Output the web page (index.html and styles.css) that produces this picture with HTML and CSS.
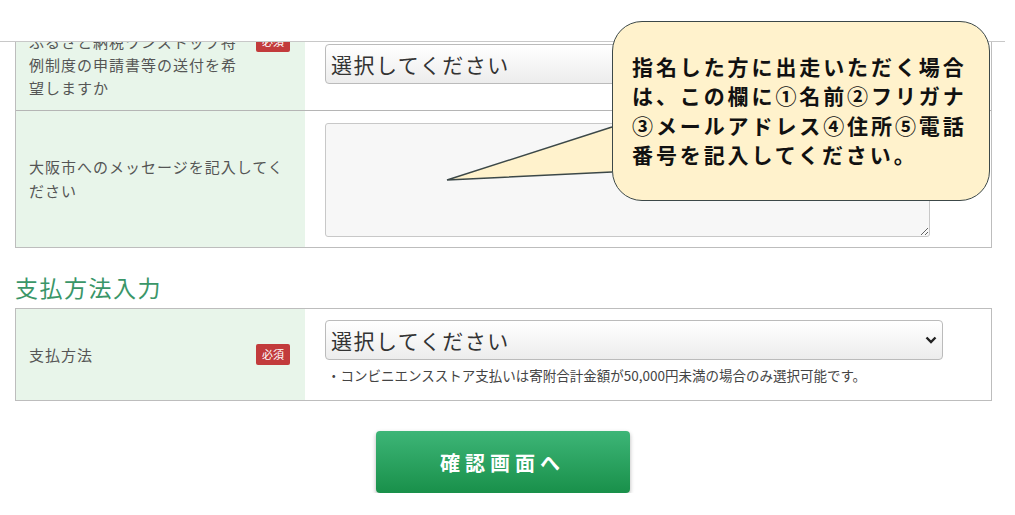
FILE: index.html
```html
<!DOCTYPE html>
<html lang="ja">

<head>
    <meta charset="UTF-8">
    <title>寄附申込 入力</title>
    <link rel="stylesheet" href="styles.css">
</head>

<body>
    <div class="topbar"></div>

    <div class="page">
        <div class="form-table">
            <div class="row row-first">
                <div class="label">
                    <span class="label-text">ふるさと納税ワンストップ特例制度の申請書等の送付を希望しますか</span>
                    <span class="badge">必須</span>
                </div>
                <div class="field">
                    <div class="select-wrap">
                        <select class="select">
                            <option>選択してください</option>
                        </select>
                        <svg class="chevron" width="12" height="8" viewBox="0 0 12 8">
                            <path d="M1.5 1.5 L6 6 L10.5 1.5" fill="none" stroke="#222" stroke-width="2.4" />
                        </svg>
                    </div>
                </div>
            </div>
            <div class="row row-message">
                <div class="label">
                    <span class="label-text">大阪市へのメッセージを記入してください</span>
                </div>
                <div class="field">
                    <textarea class="message"></textarea>
                </div>
            </div>
        </div>

        <h2 class="section-title">支払方法入力</h2>

        <div class="form-table">
            <div class="row row-payment">
                <div class="label">
                    <span class="label-text">支払方法</span>
                    <span class="badge">必須</span>
                </div>
                <div class="field">
                    <div class="select-wrap">
                        <select class="select">
                            <option>選択してください</option>
                        </select>
                        <svg class="chevron" width="12" height="8" viewBox="0 0 12 8">
                            <path d="M1.5 1.5 L6 6 L10.5 1.5" fill="none" stroke="#222" stroke-width="2.4" />
                        </svg>
                    </div>
                    <p class="note">・コンビニエンスストア支払いは寄附合計金額が50,000円未満の場合のみ選択可能です。</p>
                </div>
            </div>
        </div>

        <div class="actions">
            <button class="confirm">確認画面へ</button>
        </div>

        <!-- callout over the message field -->
        <svg class="callout-tail" width="180" height="70" viewBox="0 0 180 70">
            <path d="M172 7 L7 60 L172 52" fill="#fff2cc" stroke="#3c4848" stroke-width="1.4" stroke-linejoin="miter" />
        </svg>
        <div class="callout">
            指名した方に出走いただく場合は、この欄に①名前②フリガナ③メールアドレス④住所⑤電話番号を記入してください。
        </div>
    </div>
</body>

</html>
```

FILE: styles.css
```css
body {
    margin: 0;
    background-color: #fff;
    font-family: "Noto Sans CJK JP", "Noto Sans", sans-serif;
    color: #555;
}

.topbar {
    position: fixed;
    top: 0;
    left: 0;
    width: 1005px;
    height: 41px;
    background-color: #fff;
    border-bottom: 1px solid #c8c8c8;
    z-index: 5;
}

.page {
    position: relative;
    padding: 18px 0 0 15px;
    width: 977px;
}

.form-table {
    border: 1px solid #bdbdbd;
}

.row {
    display: grid;
    grid-template-columns: 289px 1fr;
    min-height: 91px;
}

.row + .row {
    border-top: 1px solid #b5b5b5;
}

.label {
    background-color: #e8f5ea;
    display: flex;
    align-items: center;
    justify-content: space-between;
    padding: 0 15px 0 13px;
    font-size: 15px;
    line-height: 23px;
    letter-spacing: 1px;
}

.row-first .label-text {
    width: 215px;
}

.row-message .label-text {
    width: 265px;
    line-height: 24px;
}

.row-first .badge {
    align-self: flex-start;
    margin-top: 12px;
}

.badge {
    flex-shrink: 0;
    background-color: #c23b3c;
    color: #fff;
    font-size: 11px;
    line-height: 21px;
    width: 34px;
    text-align: center;
    letter-spacing: 0;
    border-radius: 2px;
}

.field {
    display: flex;
    flex-direction: column;
    justify-content: center;
    padding: 10px 0 11px 20px;
}

.row-payment .field {
    justify-content: flex-start;
    padding: 11px 0 8px 20px;
}

.select-wrap {
    position: relative;
    width: 618px;
}

.select {
    display: block;
    appearance: none;
    width: 100%;
    height: 40px;
    padding: 0 30px 0 5px;
    font-family: inherit;
    font-size: 21px;
    letter-spacing: 1.5px;
    color: #333;
    border: 1px solid #bbb;
    border-radius: 4px;
    background: linear-gradient(#fff, #ececec);
}

.chevron {
    position: absolute;
    right: 6px;
    top: 16px;
}

.note {
    margin: 6px 0 0 2px;
    font-size: 13.5px;
    line-height: 18px;
    color: #444;
}

.row-message .field {
    padding: 12px 0 10px 20px;
}

.message {
    display: block;
    width: 605px;
    height: 114px;
    box-sizing: border-box;
    background-color: #f7f7f7;
    border: 1px solid #c8c8c8;
    border-radius: 3px;
}

.section-title {
    margin: 24px 0 6px;
    font-size: 23px;
    line-height: 30px;
    font-weight: normal;
    color: #3a9668;
    letter-spacing: 1.5px;
}

.actions {
    display: flex;
    justify-content: center;
    padding: 30px 0 0 0;
    width: 975px;
}

.confirm {
    width: 254px;
    height: 62px;
    border: none;
    border-radius: 4px;
    background: linear-gradient(#3db577, #19904a);
    box-shadow: 0 2px 4px rgba(0, 0, 0, 0.3);
    color: #fff;
    font-family: inherit;
    font-size: 20px;
    font-weight: bold;
    letter-spacing: 5px;
    cursor: pointer;
}

.callout-tail {
    position: absolute;
    left: 440px;
    top: 120px;
    z-index: 6;
}

.callout {
    position: absolute;
    left: 612px;
    top: 21px;
    width: 338px;
    height: 148px;
    padding: 30px 19px 0 19px;
    background-color: #fff2cc;
    border: 1.5px solid #3c4848;
    border-radius: 30px;
    color: #111;
    font-size: 21px;
    font-weight: bold;
    line-height: 29.3px;
    letter-spacing: 2.9px;
    z-index: 7;
}
```
